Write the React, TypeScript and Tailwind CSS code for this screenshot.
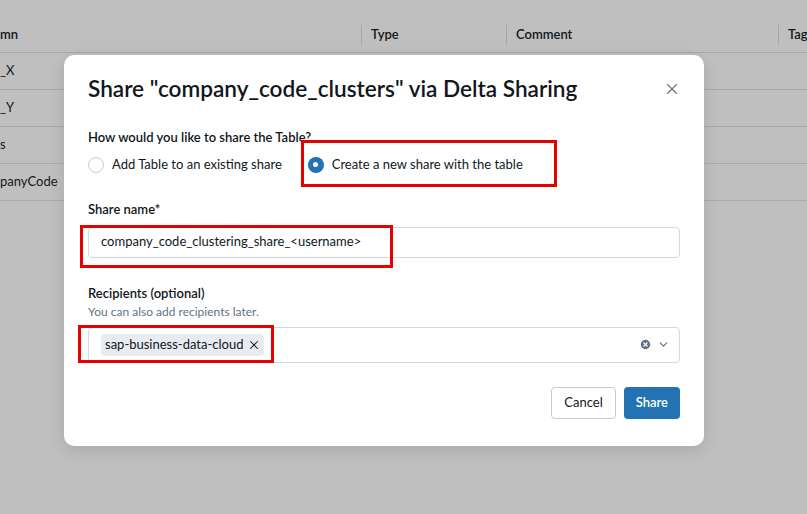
import { X, ChevronDown, CircleX } from 'lucide-react';

const rows = [
  { name: '_X' },
  { name: '_Y' },
  { name: 's' },
  { name: 'panyCode', badge: true },
];

const BackgroundTable = () => (
  <div className="pt-[17px] text-[13px] text-[#11171c]">
    <div className="flex h-[36px] items-center border-b border-[#a9a9a9] font-semibold">
      <div className="w-[361px] shrink-0">mn</div>
      <div className="h-[20px] w-px shrink-0 bg-[#a5a5a5]" />
      <div className="w-[144px] shrink-0 pl-[9px]">Type</div>
      <div className="h-[20px] w-px shrink-0 bg-[#a5a5a5]" />
      <div className="w-[271px] shrink-0 pl-[9px]">Comment</div>
      <div className="h-[20px] w-px shrink-0 bg-[#a5a5a5]" />
      <div className="shrink-0 pl-[9px]">Tags</div>
    </div>
    {rows.map((r) => (
      <div key={r.name} className="flex h-[37px] items-center gap-[6px] border-b border-[#a9a9a9]">
        <span>{r.name}</span>
        {r.badge && <span className="h-[20px] w-[16px] rounded-[4px] bg-[#c4ab9c]" />}
      </div>
    ))}
  </div>
);

const Radio = ({ checked, label }: { checked?: boolean; label: string }) => (
  <label className="flex items-center gap-[8px]">
    {checked ? (
      <span className="flex h-[16px] w-[16px] items-center justify-center rounded-full bg-[#2272b4]">
        <span className="h-[5px] w-[5px] rounded-full bg-white" />
      </span>
    ) : (
      <span className="h-[16px] w-[16px] rounded-full border border-[#c0cdd8] bg-white" />
    )}
    <span>{label}</span>
  </label>
);

const ShareDialog = () => (
  <div className="absolute left-[64px] top-[55px] flex h-[391px] w-[640px] flex-col rounded-[10px] bg-white px-[24px] pt-[20px] text-[13px] text-[#11171c] shadow-[0_4px_16px_rgba(0,0,0,0.12)]">
    <div className="flex items-center justify-between">
      <h1 className="text-[22.6px] leading-[28px] font-semibold">
        Share "company_code_clusters" via Delta Sharing
      </h1>
      <X className="mr-[-1px] h-[18px] w-[18px] text-[#5f7281]" strokeWidth={1.5} />
    </div>

    <div className="mt-[24px] font-semibold leading-[20px]">How would you like to share the Table?</div>
    <div className="mt-[8px] flex items-center gap-[26px]">
      <Radio label="Add Table to an existing share" />
      <Radio checked label="Create a new share with the table" />
    </div>

    <div className="mt-[24px] font-semibold leading-[20px]">Share name*</div>
    <div className="mt-[8px] flex h-[31px] items-center rounded-[4px] border border-[#d1d9e1] px-[12px]">
      company_code_clustering_share_&lt;username&gt;
    </div>

    <div className="mt-[25px] font-semibold leading-[20px]">Recipients (optional)</div>
    <div className="text-[12px] leading-[18px] text-[#5f7281]">You can also add recipients later.</div>
    <div className="mt-[6px] flex h-[36px] items-center rounded-[4px] border border-[#d1d9e1] pl-[12px] pr-[9px]">
      <span className="flex h-[22px] items-center gap-[4px] rounded-[4px] bg-[#e8ecf0] pl-[4px] pr-[3px]">
        sap-business-data-cloud
        <X className="h-[14px] w-[14px] text-[#11171c]" strokeWidth={1.75} />
      </span>
      <div className="ml-auto flex items-center gap-[5px]">
        <CircleX className="h-[13px] w-[13px] fill-[#5f7281] text-white" strokeWidth={2.5} />
        <ChevronDown className="h-[13px] w-[13px] text-[#5f7281]" strokeWidth={2} />
      </div>
    </div>

    <div className="mt-[24px] flex justify-end gap-[8px]">
      <button className="h-[32px] rounded-[4px] border border-[#c0cdd8] bg-white px-[12px] text-[13px] text-[#11171c]">
        Cancel
      </button>
      <button className="h-[32px] rounded-[4px] bg-[#2272b4] px-[12px] text-[13px] font-semibold text-white">
        Share
      </button>
    </div>
  </div>
);

export default function App() {
  return (
    <div
      className="relative h-[514px] w-[807px] overflow-hidden bg-[#bfbfbf]"
      style={{ fontFamily: 'Lato, "Noto Sans", sans-serif' }}
    >
      <BackgroundTable />
      <ShareDialog />
      {/* annotation boxes drawn over the dialog */}
      <div className="absolute left-[301px] top-[140px] h-[47px] w-[256px] border-[3px] border-[#e60000]" />
      <div className="absolute left-[80px] top-[225px] h-[43px] w-[313px] border-[3px] border-[#e60000]" />
      <div className="absolute left-[78px] top-[325px] h-[38px] w-[196px] border-[3px] border-[#e60000]" />
    </div>
  );
}
